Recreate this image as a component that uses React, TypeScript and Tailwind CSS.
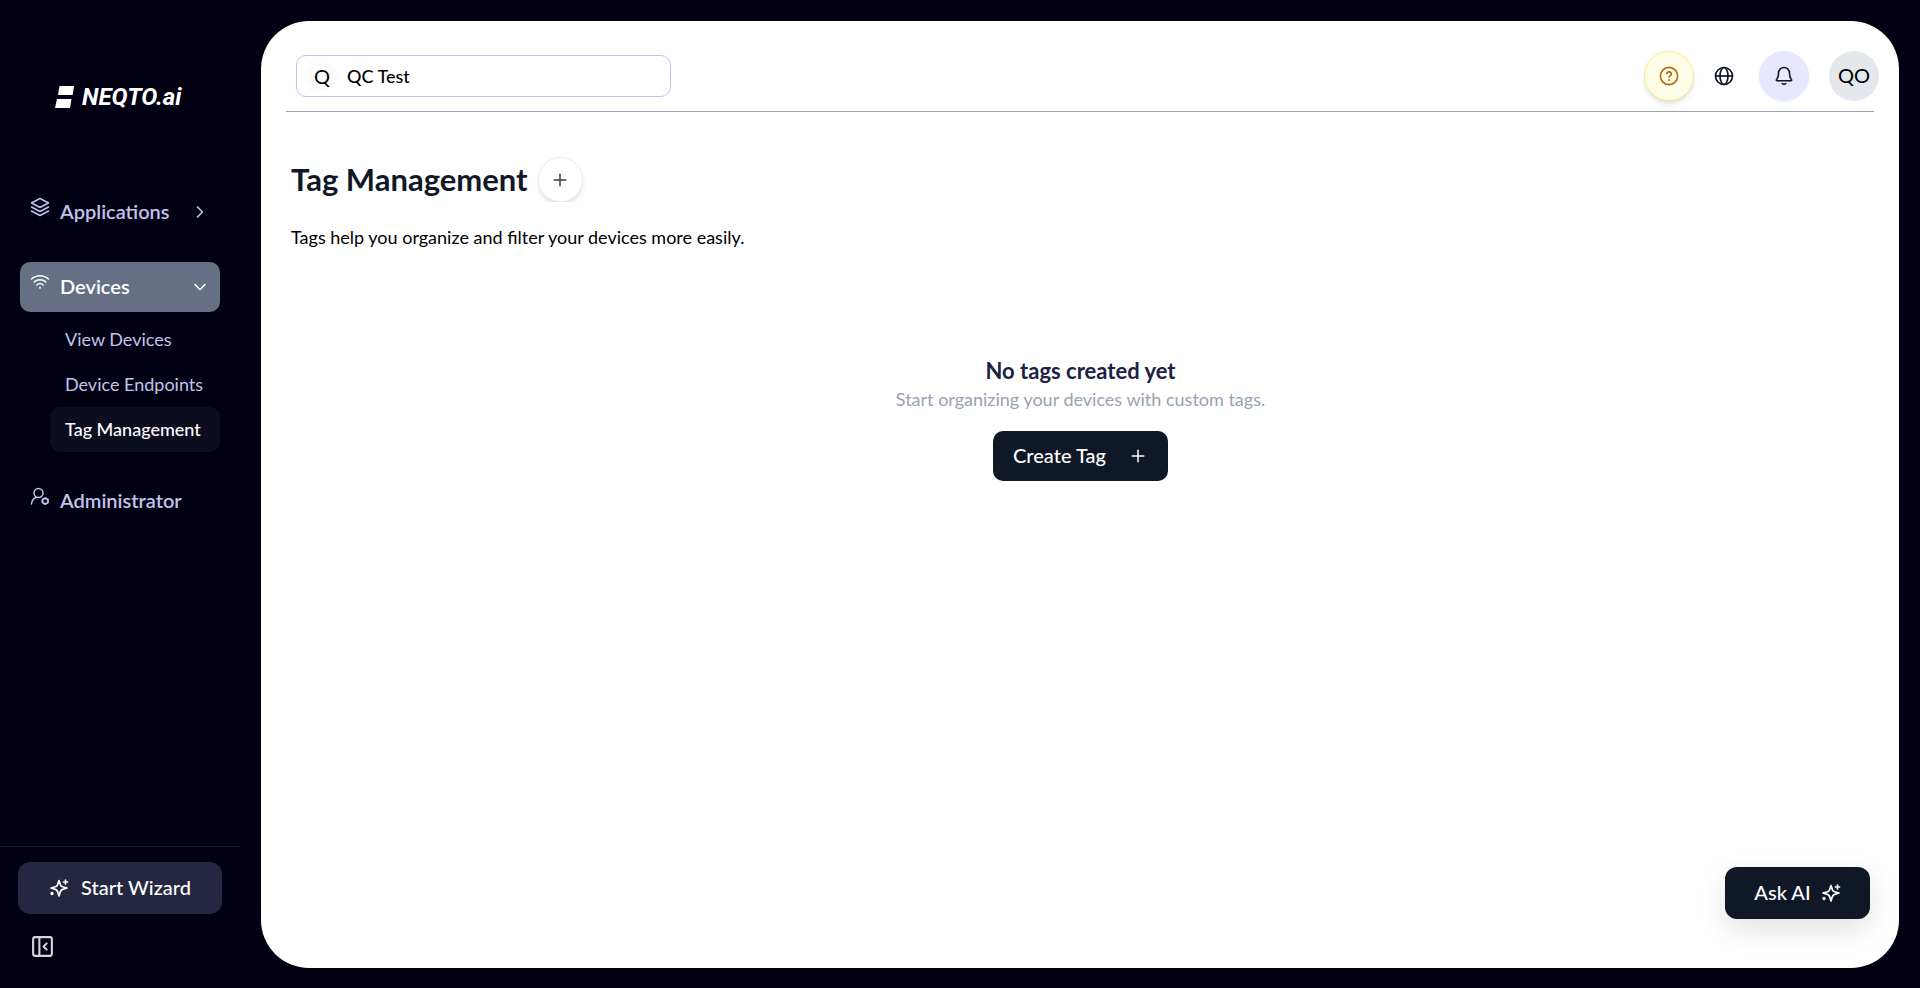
import type { ReactNode } from "react";
import { ChevronDown, ChevronRight, PanelLeftClose, Plus } from "lucide-react";

const SparkleIcon = ({ className }: { className?: string }) => (
  <svg viewBox="0 0 20 20" fill="none" stroke="currentColor" strokeWidth="1.7" strokeLinecap="round" strokeLinejoin="round" className={className} aria-hidden="true">
    <path d="M10 2.500 11.400 6.700Q12 8.300 13.600 8.800L18 10l-4.400 1.400Q12 12 11.400 13.600L10 18l-1.400-4.400Q8 12 6.400 11.400L2 10l4.400-1.200Q8 8.300 8.600 6.700Z" />
    <path d="M16.500 2v4M14.500 4h4" />
    <circle cx="3" cy="15.500" r="0.800" fill="currentColor" />
  </svg>
);

const LayersIcon = () => (
  <svg viewBox="0 0 20 20" fill="none" stroke="currentColor" strokeWidth="1.500" strokeLinecap="round" strokeLinejoin="round" className="size-5" aria-hidden="true">
    <path d="M10 1.500 18.500 6 10 10.500 1.500 6Z" />
    <path d="M1.500 10 10 14.500 18.500 10" />
    <path d="M1.500 14 10 18.500 18.500 14" />
  </svg>
);

const WifiIcon = () => (
  <svg viewBox="0 0 20 20" fill="none" stroke="currentColor" strokeWidth="1.500" strokeLinecap="round" className="size-5" aria-hidden="true">
    <path d="M1.500 7a12.500 12.500 0 0 1 17 0" />
    <path d="M4.200 10a8.500 8.500 0 0 1 11.600 0" />
    <path d="M6.900 13a4.600 4.600 0 0 1 6.200 0" />
    <circle cx="10" cy="15.700" r="1" fill="currentColor" stroke="none" />
  </svg>
);

const UserCogIcon = () => (
  <svg viewBox="0 0 20 20" fill="none" stroke="currentColor" strokeWidth="1.500" strokeLinecap="round" strokeLinejoin="round" className="size-5" aria-hidden="true">
    <circle cx="8.500" cy="7" r="4.500" />
    <path d="M1.500 18c.3-3.400 1.800-5.600 4.700-6.500" />
    <path d="m15.200 12 2.700 1.500v3l-2.700 1.600-2.700-1.600v-3Z" strokeWidth="2" />
  </svg>
);

const HelpIcon = () => (
  <svg viewBox="0 0 20 20" fill="none" stroke="currentColor" strokeWidth="1.600" strokeLinecap="round" strokeLinejoin="round" className="size-5" aria-hidden="true">
    <circle cx="10" cy="10" r="8.600" />
    <path d="M7.700 7.600a2.400 2.400 0 0 1 4.700.6c0 1.500-2.300 1.800-2.300 3" />
    <circle cx="10" cy="13.900" r="1" fill="currentColor" stroke="none" />
  </svg>
);

const GlobeIcon = () => (
  <svg viewBox="0 0 20 20" fill="none" stroke="currentColor" strokeWidth="1.700" className="size-5" aria-hidden="true">
    <circle cx="10" cy="10" r="8.500" />
    <ellipse cx="10" cy="10" rx="4" ry="8.500" />
    <path d="M1.500 10h17" />
  </svg>
);

const BellIcon = () => (
  <svg viewBox="0 0 20 20" fill="none" stroke="currentColor" strokeWidth="1.600" strokeLinecap="round" strokeLinejoin="round" className="size-5" aria-hidden="true">
    <path d="M10 1.500A5.500 5.500 0 0 0 4.500 7c0 3.300-.6 5-1.700 6.200-.8.900-.5 1.500.3 1.500h13.800c.8 0 1.100-.6.300-1.500-1.100-1.200-1.700-2.900-1.700-6.200A5.500 5.500 0 0 0 10 1.500Z" />
    <path d="M8.300 17.600q1.700 1.200 3.400 0" />
  </svg>
);

const Logo = () => (
  <div className="flex items-center gap-2 pt-px pl-[55px] text-white">
    <svg viewBox="0 0 19 22" fill="currentColor" className="h-[22px] w-[19px]" aria-hidden="true">
      <path d="M4.500 0H19l-1.400 9H3Z" />
      <path d="M2 13h14.500L15 22H0Z" />
    </svg>
    <span className="font-[Roboto] text-2xl leading-7 font-bold italic">NEQTO.ai</span>
  </div>
);

const subItems = [
  { label: "View Devices", active: false },
  { label: "Device Endpoints", active: false },
  { label: "Tag Management", active: true },
];

type NavItemProps = { icon: ReactNode; label: string; trailing?: ReactNode; active?: boolean };

const NavItem = ({ icon, label, trailing, active }: NavItemProps) => (
  <button
    type="button"
    className={`flex h-[50px] w-full items-center rounded-[10px] px-2.5 text-xl font-semibold ${active ? "bg-[#667085] text-white" : "text-[#c3c3ea]"}`}
  >
    <span className="mr-2.5 pb-2.5">{icon}</span>
    <span className="pb-0.5">{label}</span>
    <span className="ml-auto">{trailing}</span>
  </button>
);

const Sidebar = () => (
  <aside className="flex w-60 shrink-0 flex-col pt-[82px]">
    <Logo />
    <nav className="mt-[76px] flex flex-col px-5">
      <NavItem icon={<LayersIcon />} label="Applications" trailing={<ChevronRight className="size-5" />} />
      <div className="mt-[25px]">
        <NavItem active icon={<WifiIcon />} label="Devices" trailing={<ChevronDown className="size-5" />} />
        <ul className="mt-[5px] ml-[30px]">
          {subItems.map((item) => (
            <li key={item.label}>
              <a
                href="#"
                className={`flex h-[45px] items-center rounded-[10px] px-[15px] pb-0.5 text-lg whitespace-nowrap ${item.active ? "bg-[#0d0d20] font-medium text-white" : "text-[#c3c3ea]"}`}
              >
                {item.label}
              </a>
            </li>
          ))}
        </ul>
      </div>
      <div className="mt-6">
        <NavItem icon={<UserCogIcon />} label="Administrator" />
      </div>
    </nav>
    <div className="mt-auto border-t border-[#1a1b2b] px-[18px] pt-[15px] pb-[29px]">
      <button type="button" className="flex h-[52px] w-full items-center justify-center gap-3 rounded-xl bg-[#24273f] text-xl font-medium text-white">
        <SparkleIcon className="size-5" />
        <span className="pb-0.5">Start Wizard</span>
      </button>
      <button type="button" aria-label="Collapse sidebar" className="mt-5 ml-3 flex text-[#d5d5da]">
        <PanelLeftClose className="size-[25px]" />
      </button>
    </div>
  </aside>
);

const Header = () => (
  <header className="mx-[25px] flex h-[91px] items-center justify-between border-b border-[#98a2b3] pt-5 pl-2.5">
    <label className="flex h-[42px] w-[375px] items-center rounded-[10px] border border-[#c3c3ea] pr-4 pl-2.5">
      <span className="flex size-[30px] items-center justify-center rounded-full bg-[#fbfbfb] text-xl">Q</span>
      <input type="text" aria-label="Organization" defaultValue="QC Test" className="ml-2.5 min-w-0 flex-1 text-lg font-medium outline-none" />
    </label>
    <div className="-mr-[5px] flex items-center">
      <button type="button" aria-label="Help" className="flex size-[50px] items-center justify-center rounded-full border border-[#fdec85] bg-[#fffce8] text-[#b5650b] shadow-md">
        <HelpIcon />
      </button>
      <button type="button" aria-label="Language" className="ml-5 flex text-[#101828]">
        <GlobeIcon />
      </button>
      <button type="button" aria-label="Notifications" className="ml-[25px] flex size-[50px] items-center justify-center rounded-full bg-[#e7e7ff] text-[#101828] shadow-xs">
        <BellIcon />
      </button>
      <button type="button" className="ml-5 flex size-[50px] items-center justify-center rounded-full bg-[#e4e7ec] pb-0.5 text-xl">QO</button>
    </div>
  </header>
);

const App = () => (
  <div className="flex min-h-screen bg-[#000012] font-[Lato,sans-serif] text-black">
    <Sidebar />
    <main className="mt-[21px] mr-[21px] mb-5 ml-[21px] flex flex-1 flex-col rounded-[48px] bg-white">
      <Header />
      <div className="flex flex-1 flex-col pr-[29px] pl-[30px]">
        <div className="mt-[45px] flex h-[45px] items-center gap-2.5 overflow-hidden">
          <h1 className="pb-0.5 text-[31px] leading-10 font-bold text-[#101828]">Tag Management</h1>
          <button type="button" aria-label="Add tag" className="flex size-[45px] items-center justify-center rounded-full border border-[#eaecf0] text-[#344054] shadow-md">
            <Plus className="size-5" strokeWidth={1.8} />
          </button>
        </div>
        <p className="mt-[21px] text-lg leading-7">Tags help you organize and filter your devices more easily.</p>

        <section className="mt-[106px] flex flex-col items-center">
          <h2 className="text-[22px] leading-7 font-bold text-[#1d2143]">No tags created yet</h2>
          <p className="text-lg leading-7 text-[#98a2b3]">Start organizing your devices with custom tags.</p>
          <button type="button" className="mt-[18px] flex h-[50px] items-center gap-[22px] rounded-[10px] bg-[#101828] px-5 text-xl font-medium text-white">
            <span className="pb-0.5">Create Tag</span>
            <Plus className="size-5" strokeWidth={1.8} />
          </button>
        </section>

        <button type="button" className="mt-auto mb-[49px] flex h-[52px] w-[145px] items-center justify-center gap-2.5 self-end rounded-xl bg-[#101828] text-xl font-medium text-white shadow-[0_10px_30px_rgba(0,0,0,0.12)]">
          <span className="pb-0.5">Ask AI</span>
          <SparkleIcon className="size-5" />
        </button>
      </div>
    </main>
  </div>
);

export default App;
